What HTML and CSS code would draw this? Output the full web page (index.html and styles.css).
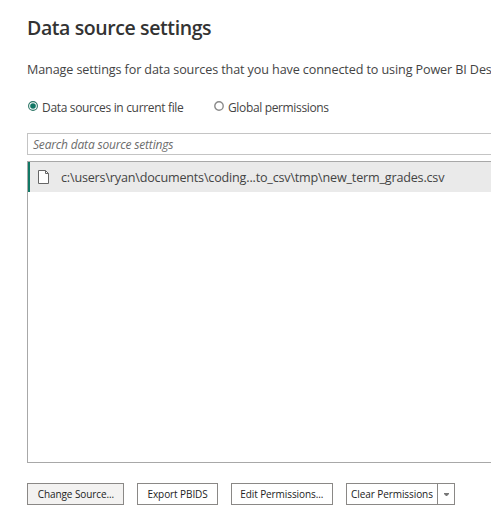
FILE: index.html
```html
<!DOCTYPE html>
<html lang="en">
<head>
<meta charset="utf-8">
<title>Data source settings</title>
<link rel="stylesheet" href="styles.css">
</head>
<body>
<main class="dialog">
  <h1 class="title">Data source settings</h1>
  <p class="intro">Manage settings for data sources that you have connected to using Power BI Des</p>
  <div class="scopes">
    <label class="scope"><svg class="radio" viewBox="0 0 10 10"><circle cx="5" cy="5" r="4.4" fill="#fff" stroke="#2a7464" stroke-width="1.1"/><circle cx="5" cy="5" r="2.8" fill="#117865"/></svg><span class="scope-file">Data sources in current file</span></label>
    <label class="scope"><svg class="radio" viewBox="0 0 10 10"><circle cx="5" cy="5" r="4.2" fill="#fff" stroke="#8a8a8a" stroke-width="1.4"/></svg><span class="scope-global">Global permissions</span></label>
  </div>
  <div class="search"><span>Search data source settings</span></div>
  <div class="list">
    <div class="row">
      <svg class="file" viewBox="0 0 11 14"><path d="M.5.5H7.5L10.5 3.5V13.5H.5Z" fill="#fff" stroke="#666"/><path d="M7.5.5V3.5H10.5" fill="none" stroke="#666"/></svg>
      <span class="path">c:\users\ryan\documents\coding...to_csv\tmp\new_term_grades.csv</span>
    </div>
  </div>
  <div class="actions">
    <button class="btn change"><span class="caption">Change Source...</span></button>
    <button class="btn export"><span class="caption">Export PBIDS</span></button>
    <button class="btn edit"><span class="caption">Edit Permissions...</span></button>
    <div class="split">
      <button class="btn clear"><span class="caption">Clear Permissions</span></button>
      <button class="btn more" aria-label="More"><svg class="caret" viewBox="0 0 5 3"><path d="M0 0H5V1L3 3H2L0 1Z" fill="#777"/></svg></button>
    </div>
  </div>
</main>
</body>
</html>
```
FILE: styles.css
```css
* { box-sizing: border-box; }
body {
  margin: 0;
  background: #fff;
  color: #444;
  font-family: "Open Sans", "Noto Sans", sans-serif;
  font-size: 12px;
}
.dialog {
  display: flex;
  flex-direction: column;
  padding: 14px 0 0 27px;
  white-space: nowrap;
}
.title {
  margin: 0;
  font-size: 19.5px;
  line-height: 28px;
  font-weight: 600;
  color: #333;
  letter-spacing: -0.4px;
}
.intro { margin: 18px 0 0; font-size: 12.6px; line-height: 20px; letter-spacing: -0.11px; overflow: hidden; }
.scopes { display: flex; gap: 30px; margin-top: 19px; padding-left: 1px; height: 18px; }
.scope { display: flex; gap: 4px; line-height: 18px; }
.radio { width: 10px; height: 10px; margin-top: 2px; }
.scope-file { width: 142px; letter-spacing: -0.33px; }
.scope-global { letter-spacing: -0.35px; }
.search {
  height: 22px;
  margin-top: 16px;
  padding-left: 5px;
  border: 1px solid #c4c4c4;
  border-right: 0;
  font-style: italic;
  line-height: 21px;
  letter-spacing: -0.18px;
  color: #6c6c6c;
}
.list { height: 302px; margin-top: 6px; border: 1px solid #a8a8a8; border-right: 0; }
.row {
  display: flex;
  align-items: center;
  height: 30px;
  padding-left: 8px;
  border-left: 2px solid #117865;
  background: #eaeaea;
}
.file { width: 11px; height: 14px; margin-right: 12px; }
.path { font-size: 12.6px; letter-spacing: -0.19px; }
.actions { display: flex; gap: 13px; margin-top: 20px; }
.btn {
  display: flex;
  align-items: center;
  justify-content: center;
  height: 22px;
  padding: 0;
  border: 1px solid #8a8886;
  background: #fff;
  font: inherit;
  font-size: 11.5px;
  line-height: 20px;
  letter-spacing: -0.1px;
  color: #222;
  white-space: nowrap;
}
.caption { transform: scaleX(0.87); }
.change { width: 97px; background: #f3f2f1; }
.export { width: 81px; }
.edit { width: 102px; }
.split { display: flex; }
.clear { width: 92px; }
.more { width: 18px; margin-left: -1px; }
.caret { width: 5px; height: 3px; }
```
